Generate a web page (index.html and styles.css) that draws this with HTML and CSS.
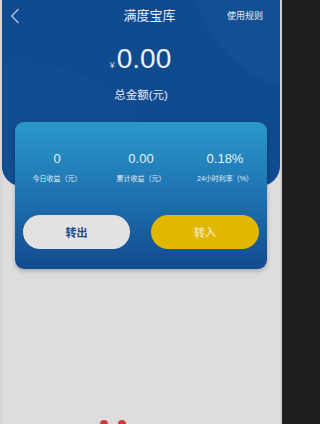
FILE: index.html
```html
<!DOCTYPE html>
<html lang="zh">
<head>
<meta charset="utf-8">
<link rel="stylesheet" href="styles.css">
</head>
<body>
<div class="app">
  <header class="hero">
    <span class="deco deco-a"></span>
    <span class="deco deco-b"></span>
    <div class="nav">
      <svg class="back" width="10" height="16" viewBox="0 0 10 16"><path d="M8.5 1 L1.8 8 L8.5 15" fill="none" stroke="#a9c1de" stroke-width="1.4"/></svg>
      <div class="title">满度宝库</div>
      <div class="rules">使用规则</div>
    </div>
    <div class="amount"><span class="yen">¥</span><span class="num">0.00</span></div>
    <div class="amount-label">总金额(元)</div>
  </header>
  <section class="card">
    <div class="stats">
      <div class="stat"><div class="val">0</div><div class="lbl">今日收益（元）</div></div>
      <div class="stat"><div class="val">0.00</div><div class="lbl">累计收益（元）</div></div>
      <div class="stat"><div class="val">0.18%</div><div class="lbl">24小时利率（%）</div></div>
    </div>
    <div class="actions">
      <button class="btn btn-out">转出</button>
      <button class="btn btn-in">转入</button>
    </div>
  </section>
  <div class="tail"><span class="dot"></span><span class="dot"></span></div>
</div>
</body>
</html>
```
FILE: styles.css
```css
html, body {
  margin: 0;
  padding: 0;
  height: 424px;
  overflow: hidden;
  background: #1e1e1e;
  font-family: "Liberation Sans", "Noto Sans CJK SC", sans-serif;
}
.app {
  width: 278px;
  height: 424px;
  background: #dddddd;
  border-left: 2px solid #d6d6d6;
  border-right: 2px solid #cfcfcf;
  overflow: hidden;
}
.hero {
  position: relative;
  height: 186px;
  background: #104b8f;
  border-radius: 0 0 20px 20px;
  overflow: hidden;
  color: #e9eef6;
}
.deco {
  position: absolute;
  border-radius: 50%;
}
.deco-a {
  width: 240px;
  height: 240px;
  left: 190px;
  top: -150px;
  background: #134f93;
}
.deco-b {
  width: 300px;
  height: 300px;
  left: -130px;
  top: 62px;
  background: #124d91;
}
.nav {
  position: relative;
  height: 28px;
  display: flex;
  align-items: center;
  padding: 0 17px 0 8px;
}
.back {
  display: block;
  margin-top: 3px;
}
.title {
  flex: 1;
  text-align: center;
  font-size: 13px;
  color: #e6ecf5;
  margin-left: 52px;
}
.rules {
  font-size: 9px;
  color: #e6ecf5;
  margin-top: 2px;
}
.amount {
  position: relative;
  text-align: center;
  margin-top: 16px;
  line-height: 30px;
  margin-left: -1px;
}
.yen {
  font-size: 9px;
  color: #c9d6e8;
  margin-right: 2px;
}
.num {
  font-size: 28px;
  color: #eef2f8;
}
.amount-label {
  position: relative;
  text-align: center;
  font-size: 11.5px;
  margin-top: 6px;
  color: #e6ecf5;
}
.card {
  position: relative;
  margin: -64px 13px 0 13px;
  height: 147px;
  border-radius: 9px;
  background: linear-gradient(180deg, #2a98cb 0%, #1e72b0 50%, #124a8e 100%);
  box-shadow: 0 2px 4px rgba(0,0,0,0.25);
  box-sizing: border-box;
  padding: 28px 8px 0 8px;
}
.stats {
  display: grid;
  grid-template-columns: 1fr 1fr 1fr;
  margin: 0 -8px;
  text-align: center;
  color: #e8f0f8;
}
.val {
  font-size: 13px;
  line-height: 18px;
}
.lbl {
  font-size: 7px;
  line-height: 10px;
  margin-top: 6px;
  color: #e6eef7;
}
.actions {
  display: flex;
  justify-content: space-between;
  margin-top: 31px;
}
.btn {
  width: 107px;
  height: 34px;
  border: none;
  border-radius: 17px;
  font-family: "Noto Sans CJK SC", sans-serif;
  font-size: 11px;
  font-weight: bold;
  padding: 0;
}
.btn-out {
  background: #e2e2e2;
  color: #1d4d8e;
}
.btn-in {
  width: 108px;
  background: #e0b800;
  color: #f3e1a3;
}
.tail {
  display: flex;
  gap: 10px;
  margin: 151px 0 0 98px;
}
.dot {
  width: 8px;
  height: 8px;
  border-radius: 50%;
  background: #d03a3a;
}
```
